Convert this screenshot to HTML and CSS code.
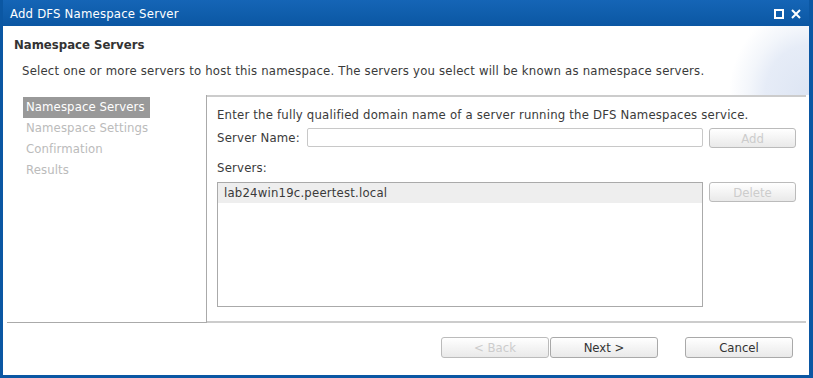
FILE: index.html
```html
<!doctype html>
<html>
<head>
    <title>Add DFS Namespace Server</title>
    <meta http-equiv="Content-Type" content="text/html; charset=utf-8" />
    <link rel="stylesheet" href="styles.css">
</head>
<body>
<div class="window">
    <div class="titlebar">
        <span class="title">Add DFS Namespace Server</span>
        <span class="controls">
            <svg width="10" height="10" viewBox="0 0 10 10"><rect x="1" y="1" width="8" height="8" fill="none" stroke="#fff" stroke-width="2"/></svg>
            <svg width="10" height="10" viewBox="0 0 10 10"><path d="M1 1 L9 9 M9 1 L1 9" stroke="#fff" stroke-width="2"/></svg>
        </span>
    </div>
    <div class="content">
        <div class="header">
            <h2>Namespace Servers</h2>
            <p>Select one or more servers to host this namespace. The servers you select will be known as namespace servers.</p>
        </div>
        <div class="main">
            <ul class="nav">
                <li class="active">Namespace Servers</li>
                <li>Namespace Settings</li>
                <li>Confirmation</li>
                <li>Results</li>
            </ul>
            <div class="panel">
                <p class="intro">Enter the fully qualified domain name of a server running the DFS Namespaces service.</p>
                <div class="row">
                    <label>Server Name:</label>
                    <input type="text" class="server-name">
                    <button class="side" disabled>Add</button>
                </div>
                <p class="servers-label">Servers:</p>
                <div class="row list-row">
                    <div class="list">
                        <div class="item">lab24win19c.peertest.local</div>
                    </div>
                    <button class="side" disabled>Delete</button>
                </div>
            </div>
        </div>
        <div class="footer">
            <button class="wide" disabled>&lt; Back</button>
            <button class="wide">Next &gt;</button>
            <button class="wide cancel">Cancel</button>
        </div>
    </div>
</div>
</body>
</html>
```

FILE: styles.css
```css
body          { margin:0; font-family:"DejaVu Sans Condensed", "DejaVu Sans", sans-serif; font-size:12px; color:#3a3a3a; letter-spacing:0.2px; }
.window       { width:813px; height:378px; box-sizing:border-box; background:#0b57a3; padding:0 4px 3px 3px; display:flex; flex-direction:column; }
.titlebar     { height:26px; display:flex; align-items:center; justify-content:space-between; padding:0 8px 0 7px; background:linear-gradient(#1565b6, #0b57a3); color:#fff; }
.title        { font-size:13px; }
.controls     { display:flex; gap:7px; padding-top:1px; }
.content      { flex:1; background:#fff; display:flex; flex-direction:column; }
.header       { height:69px; padding:0 0 0 11px; background:radial-gradient(ellipse 80px 90px at 100% 100%, #dde5f3 0, #e6ecf7 55%, #f3f6fb 75%, rgba(255,255,255,0) 100%) no-repeat; }
.header h2    { margin:0; padding-top:11px; font-size:13px; font-weight:bold; color:#333; letter-spacing:0; }
.header p     { margin:11px 0 0 8px; font-size:13px; }
.main         { height:228px; display:flex; margin:0 3px 0 4px; }
.nav          { width:200px; margin:0; padding:2px 0 0 16px; list-style:none; border-right:1px solid #aaa; border-bottom:1px solid #aaa; box-sizing:border-box; }
.nav li       { height:21px; line-height:20px; padding-left:3px; color:#bbb; font-size:13px; width:124px; letter-spacing:0.1px; }
.nav li.active{ background:#999; color:#fff; }
.panel        { flex:1; border-top:2px solid #ccc; border-bottom:2px solid #ccc; padding:10px 10px 0 10px; }
.panel p      { margin:0; font-size:13px; }
.row          { display:flex; align-items:flex-start; margin-top:6px; }
.row label    { width:90px; line-height:20px; font-size:13px; }
.server-name  { width:396px; height:19px; box-sizing:border-box; border:1px solid #c8c8c8; border-radius:2px; margin:0; padding:0; }
.side         { width:87px; height:20px; margin-left:6px; }
.servers-label{ margin-top:12px !important; }
.list-row     { margin-top:7px; }
.list         { width:486px; height:125px; box-sizing:border-box; border:1px solid #aaa; }
.item         { height:20px; line-height:20px; background:#eee; padding-left:6px; font-size:13px; }
.footer       { flex:1; display:flex; padding:14px 0 0 438px; }
button        { font-family:inherit; font-size:13px; color:#333; background:linear-gradient(#fff, #e9e9e9); border:1px solid #a9a9a9; border-radius:3px; padding:0; }
button:disabled { color:#ccc; border-color:#bbb; }
.wide         { width:108px; height:21px; margin-right:1px; }
.cancel       { margin-left:26px; }
```
